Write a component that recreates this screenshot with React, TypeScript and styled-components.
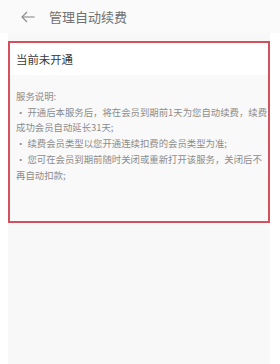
import React from "react";
import styled, { createGlobalStyle } from "styled-components";

const Global = createGlobalStyle`
  html, body { margin: 0; padding: 0; background: #ffffff; }
  body { font-family: "Noto Sans CJK SC", "Noto Sans", sans-serif; }
  * { box-sizing: border-box; }
`;

const Header = styled.div`
  height: 33px;
  background: #fafafa;
  display: flex;
  align-items: center;
  padding-left: 21px;
  gap: 14px;
`;

const Title = styled.div`
  font-size: 13px;
  color: #707070;
  line-height: 1;
`;

const Content = styled.div`
  margin: 0 10px 0 8px;
  background: #f8f8f8;
  min-height: 331px;
  padding-top: 8px;
`;

const Box = styled.div`
  border: 2px solid #d3505c;
  height: 182px;
  display: flex;
  flex-direction: column;
`;

const StatusRow = styled.div`
  background: #ffffff;
  height: 32px;
  display: flex;
  align-items: center;
  padding-left: 6px;
  font-size: 11.4px;
  color: #3a3a3a;
`;

const Notes = styled.div`
  flex: 1;
  background: #f9f9f9;
  padding: 14px 0 0 6px;
  font-size: 9.4px;
  line-height: 15.7px;
  color: #8c8c8c;
`;

const Line = styled.div``;

const Arrow = () => (
  <svg width="14" height="12" viewBox="0 0 14 12" fill="none" stroke="#8a8a8a" strokeWidth="1.1">
    <path d="M13.5 6H1" />
    <path d="M6 1L1 6l5 5" />
  </svg>
);

export default function App() {
  return (
    <>
      <Global />
      <Header>
        <Arrow />
        <Title>管理自动续费</Title>
      </Header>
      <Content>
        <Box>
          <StatusRow>当前未开通</StatusRow>
          <Notes>
            <Line>服务说明:</Line>
            <Line>· 开通后本服务后，将在会员到期前1天为您自动续费，续费成功会员自动延长31天;</Line>
            <Line>· 续费会员类型以您开通连续扣费的会员类型为准;</Line>
            <Line>· 您可在会员到期前随时关闭或重新打开该服务，关闭后不再自动扣款;</Line>
          </Notes>
        </Box>
      </Content>
    </>
  );
}
